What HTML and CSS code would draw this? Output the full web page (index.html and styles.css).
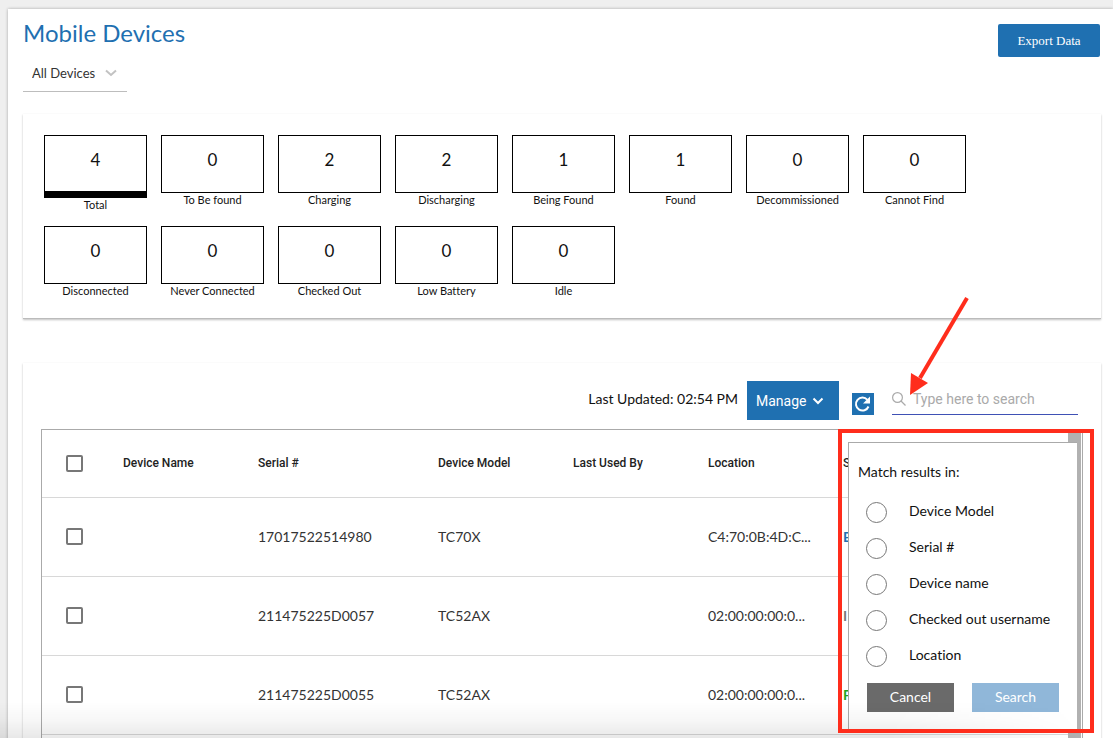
FILE: index.html
```html
<!DOCTYPE html>
<html lang="en">
<head>
<meta charset="utf-8">
<title>Mobile Devices</title>
<link rel="stylesheet" href="styles.css">
</head>
<body>
<main class="page">
  <header class="page-head">
    <div class="heading">
      <h1 class="title">Mobile Devices</h1>
      <div class="filter">
        <select class="filter-select" aria-label="Device filter"><option>All Devices</option></select>
        <svg class="filter-chevron" width="12" height="8" viewBox="0 0 12 8" aria-hidden="true"><path d="M1 1.500 6 6l5-4.500" fill="none" stroke="#c2c2c2" stroke-width="2"/></svg>
      </div>
    </div>
    <button class="export" type="button">Export Data</button>
  </header>

  <section class="card stats">
    <div class="stat"><div class="stat-box selected">4</div><div class="stat-label">Total</div></div>
    <div class="stat"><div class="stat-box">0</div><div class="stat-label">To Be found</div></div>
    <div class="stat"><div class="stat-box">2</div><div class="stat-label">Charging</div></div>
    <div class="stat"><div class="stat-box">2</div><div class="stat-label">Discharging</div></div>
    <div class="stat"><div class="stat-box">1</div><div class="stat-label">Being Found</div></div>
    <div class="stat"><div class="stat-box">1</div><div class="stat-label">Found</div></div>
    <div class="stat"><div class="stat-box">0</div><div class="stat-label">Decommissioned</div></div>
    <div class="stat"><div class="stat-box">0</div><div class="stat-label">Cannot Find</div></div>
    <div class="stat"><div class="stat-box">0</div><div class="stat-label">Disconnected</div></div>
    <div class="stat"><div class="stat-box">0</div><div class="stat-label">Never Connected</div></div>
    <div class="stat"><div class="stat-box">0</div><div class="stat-label">Checked Out</div></div>
    <div class="stat"><div class="stat-box">0</div><div class="stat-label">Low Battery</div></div>
    <div class="stat"><div class="stat-box">0</div><div class="stat-label">Idle</div></div>
  </section>

  <section class="card devices">
    <div class="toolbar">
      <span class="updated">Last Updated: 02:54 PM</span>
      <button class="manage" type="button">Manage
        <svg width="12" height="8" viewBox="0 0 12 8" aria-hidden="true"><path d="M1.500 1.500 6 6l4.500-4.500" fill="none" stroke="#fff" stroke-width="2"/></svg>
      </button>
      <button class="refresh" type="button" aria-label="Refresh">
        <svg width="22" height="22" viewBox="0 0 22 22" aria-hidden="true"><path d="M16.500 13.500A6.500 6.500 0 1 1 15.400 6.800" fill="none" stroke="#fff" stroke-width="2"/><path d="M18 3.500v7h-7z" fill="#fff"/></svg>
      </button>
      <div class="search">
        <svg class="search-icon" width="14" height="14" viewBox="0 0 14 14" aria-hidden="true"><circle cx="5.500" cy="5.500" r="4.900" fill="none" stroke="#aaa" stroke-width="1.200"/><path d="m9 9 4.500 4.500" stroke="#aaa" stroke-width="1.200"/></svg>
        <input class="search-input" type="text" aria-label="Search devices" placeholder="Type here to search">
        <form class="popup">
          <div class="popup-title">Match results in:</div>
          <div class="option"><input type="radio" name="field" id="f-model"><label for="f-model">Device Model</label></div>
          <div class="option"><input type="radio" name="field" id="f-serial"><label for="f-serial">Serial #</label></div>
          <div class="option"><input type="radio" name="field" id="f-name"><label for="f-name">Device name</label></div>
          <div class="option"><input type="radio" name="field" id="f-user"><label for="f-user">Checked out username</label></div>
          <div class="option"><input type="radio" name="field" id="f-location"><label for="f-location">Location</label></div>
          <div class="actions">
            <button class="cancel" type="button">Cancel</button>
            <button class="submit" type="button">Search</button>
          </div>
        </form>
        <div class="highlight"></div>
        <svg class="arrow" width="64" height="104" viewBox="0 0 64 104" aria-hidden="true"><path d="M60 4 13 84" stroke="#ff2d1c" stroke-width="4"/><path d="M3 101 4 79l17 10z" fill="#ff2d1c"/></svg>
      </div>
    </div>

    <div class="table-frame">
      <table class="table">
        <colgroup><col class="c-check"><col class="c-std"><col class="c-wide"><col class="c-std"><col class="c-std"><col class="c-std"><col></colgroup>
        <thead>
          <tr><th><input type="checkbox" aria-label="Select all"></th><th>Device Name</th><th>Serial #</th><th>Device Model</th><th>Last Used By</th><th>Location</th><th>S</th></tr>
        </thead>
        <tbody>
          <tr><td><input type="checkbox" aria-label="Select row 1"></td><td></td><td>17017522514980</td><td>TC70X</td><td></td><td>C4:70:0B:4D:C...</td><td class="status being">B</td></tr>
          <tr><td><input type="checkbox" aria-label="Select row 2"></td><td></td><td>211475225D0057</td><td>TC52AX</td><td></td><td>02:00:00:00:0...</td><td class="status idle">I</td></tr>
          <tr><td><input type="checkbox" aria-label="Select row 3"></td><td></td><td>211475225D0055</td><td>TC52AX</td><td></td><td>02:00:00:00:0...</td><td class="status found">F</td></tr>
          <tr><td></td><td></td><td></td><td></td><td></td><td></td><td></td></tr>
        </tbody>
      </table>
      <div class="scrollbar"></div>
    </div>
  </section>
</main>
<div class="fade"></div>
</body>
</html>
```

FILE: styles.css
```css
* { box-sizing: border-box; }

body {
  margin: 0;
  height: 100vh;
  overflow: hidden;
  position: relative;
  background: #efefef;
  color: #111;
  font-family: Lato, "Open Sans", sans-serif;
  font-size: 14px;
  font-variant-ligatures: none;
}

button, input, select { font: inherit; }

.page {
  margin: 9px 0 0 8px;
  padding: 8px 12px 0 15px;
  min-height: calc(100vh - 9px);
  background: #fff;
  box-shadow: 0 0 3px rgba(0, 0, 0, 0.3);
}

.page-head {
  display: flex;
  justify-content: space-between;
  align-items: flex-start;
  height: 97px;
}

.title {
  margin: 0;
  color: #1f70b1;
  font-size: 24px;
  font-weight: 400;
  line-height: 32px;
}

.filter {
  display: flex;
  align-items: center;
  width: 104px;
  height: 35px;
  margin-top: 8px;
  padding-bottom: 2px;
  border-bottom: 1px solid #bdbdbd;
}

.filter-select {
  appearance: none;
  width: 82px;
  padding: 0 0 0 9px;
  border: 0;
  background: none;
  color: #333;
  font-size: 13px;
}

.export {
  width: 102px;
  height: 33px;
  margin: 7px 1px 0 0;
  padding: 0;
  border: 0;
  border-radius: 2px;
  background: #1f70b1;
  color: #fff;
  font-family: "Liberation Serif", serif;
  font-size: 13px;
}

.card {
  background: #fff;
  box-shadow: 0 1px 2px rgba(0, 0, 0, 0.25);
}

.stats {
  display: flex;
  flex-wrap: wrap;
  gap: 12px 14px;
  padding: 21px 21px 18px;
  border-bottom: 1px solid #bbb;
}

.stat { width: 103px; text-align: center; }

.stat-box {
  height: 58px;
  border: 1px solid #000;
  font-size: 17px;
  line-height: 48px;
}

.stat-box.selected { height: 63px; border-bottom-width: 7px; }

.stat-label {
  height: 16px;
  font-size: 11px;
  line-height: 14px;
  white-space: nowrap;
}

.devices { margin-top: 44px; padding: 0 18px; }

.toolbar {
  display: flex;
  justify-content: flex-end;
  height: 66px;
  padding: 18px 5px 0 0;
}

.updated { margin-right: 9px; line-height: 36px; }

.manage {
  display: flex;
  align-items: center;
  gap: 6px;
  width: 92px;
  height: 39px;
  padding: 0 9px;
  border: 0;
  background: #1f70b1;
  color: #fff;
  font-family: Roboto, sans-serif;
  font-size: 14px;
}

.refresh {
  width: 22px;
  height: 22px;
  margin: 12px 18px 0 13px;
  padding: 0;
  border: 0;
  background: #1f70b1;
}

.refresh svg { display: block; }

.search {
  position: relative;
  display: flex;
  align-items: center;
  gap: 7px;
  width: 186px;
  height: 34px;
  padding-top: 2px;
  border-bottom: 1px solid #3f51b5;
}

.search-input {
  flex: 1;
  min-width: 0;
  padding: 0;
  border: 0;
  outline: 0;
  background: none;
  font-family: Roboto, sans-serif;
}

.search-input::placeholder { color: #aaa; opacity: 1; }

.popup {
  position: absolute;
  top: 61px;
  right: 1px;
  z-index: 2;
  width: 229px;
  height: 290px;
  padding: 19px 9px;
  border: solid #aaa;
  border-width: 1px 0 0 1px;
  background: #fff;
}

.popup-title { margin-bottom: 12px; line-height: 20px; }

.option {
  display: flex;
  align-items: center;
  gap: 22px;
  height: 36px;
  padding-left: 8px;
}

.option label { padding-bottom: 3px; }

.option input {
  appearance: none;
  width: 21px;
  height: 21px;
  margin: 0;
  border: 1px solid #777;
  border-radius: 50%;
  background: #fff;
}

.actions {
  display: flex;
  gap: 18px;
  margin: 9px 0 0 9px;
}

.actions button {
  width: 87px;
  height: 29px;
  padding: 0 0 3px;
  border: 0;
  color: #fff;
}

.cancel { background: #6a6a6a; }
.submit { background: #90b7d9; }

.highlight {
  position: absolute;
  top: 48px;
  right: -16px;
  z-index: 4;
  width: 256px;
  height: 304px;
  border: 4px solid #ff2d1c;
  pointer-events: none;
}

.arrow {
  position: absolute;
  top: -87px;
  left: 15px;
  z-index: 4;
  pointer-events: none;
}

.table-frame {
  display: flex;
  border: 1px solid #aaa;
}

.table {
  flex: 1;
  width: 0;
  table-layout: fixed;
  border-collapse: collapse;
  color: #333;
}

.c-check { width: 81px; }
.c-std { width: 135px; }
.c-wide { width: 180px; }

.table th, .table td {
  height: 79px;
  padding: 0;
  border-bottom: 1px solid #d8d8d8;
  text-align: left;
  white-space: nowrap;
}

.table th {
  height: 67px;
  color: #222;
  font-family: Roboto, sans-serif;
  font-size: 12px;
  font-weight: 500;
}

.table input {
  appearance: none;
  display: block;
  width: 17px;
  height: 17px;
  margin: 0 0 0 24px;
  border: 2px solid #777;
  border-radius: 2px;
}

.table .status { font-weight: 700; }
.being { color: #1f70b1; }
.idle { color: #777; }
.found { color: #1fa51f; }

.scrollbar {
  width: 13px;
  margin-right: 1px;
  background: #b1b1b1;
}

.fade {
  position: absolute;
  right: 0;
  bottom: 0;
  left: 0;
  z-index: 3;
  height: 36px;
  background: linear-gradient(to bottom, rgba(0, 0, 0, 0), rgba(0, 0, 0, 0.03) 50%, rgba(0, 0, 0, 0.09));
  mask-image: linear-gradient(to right, #000 80%, transparent 97%);
  pointer-events: none;
}
```
